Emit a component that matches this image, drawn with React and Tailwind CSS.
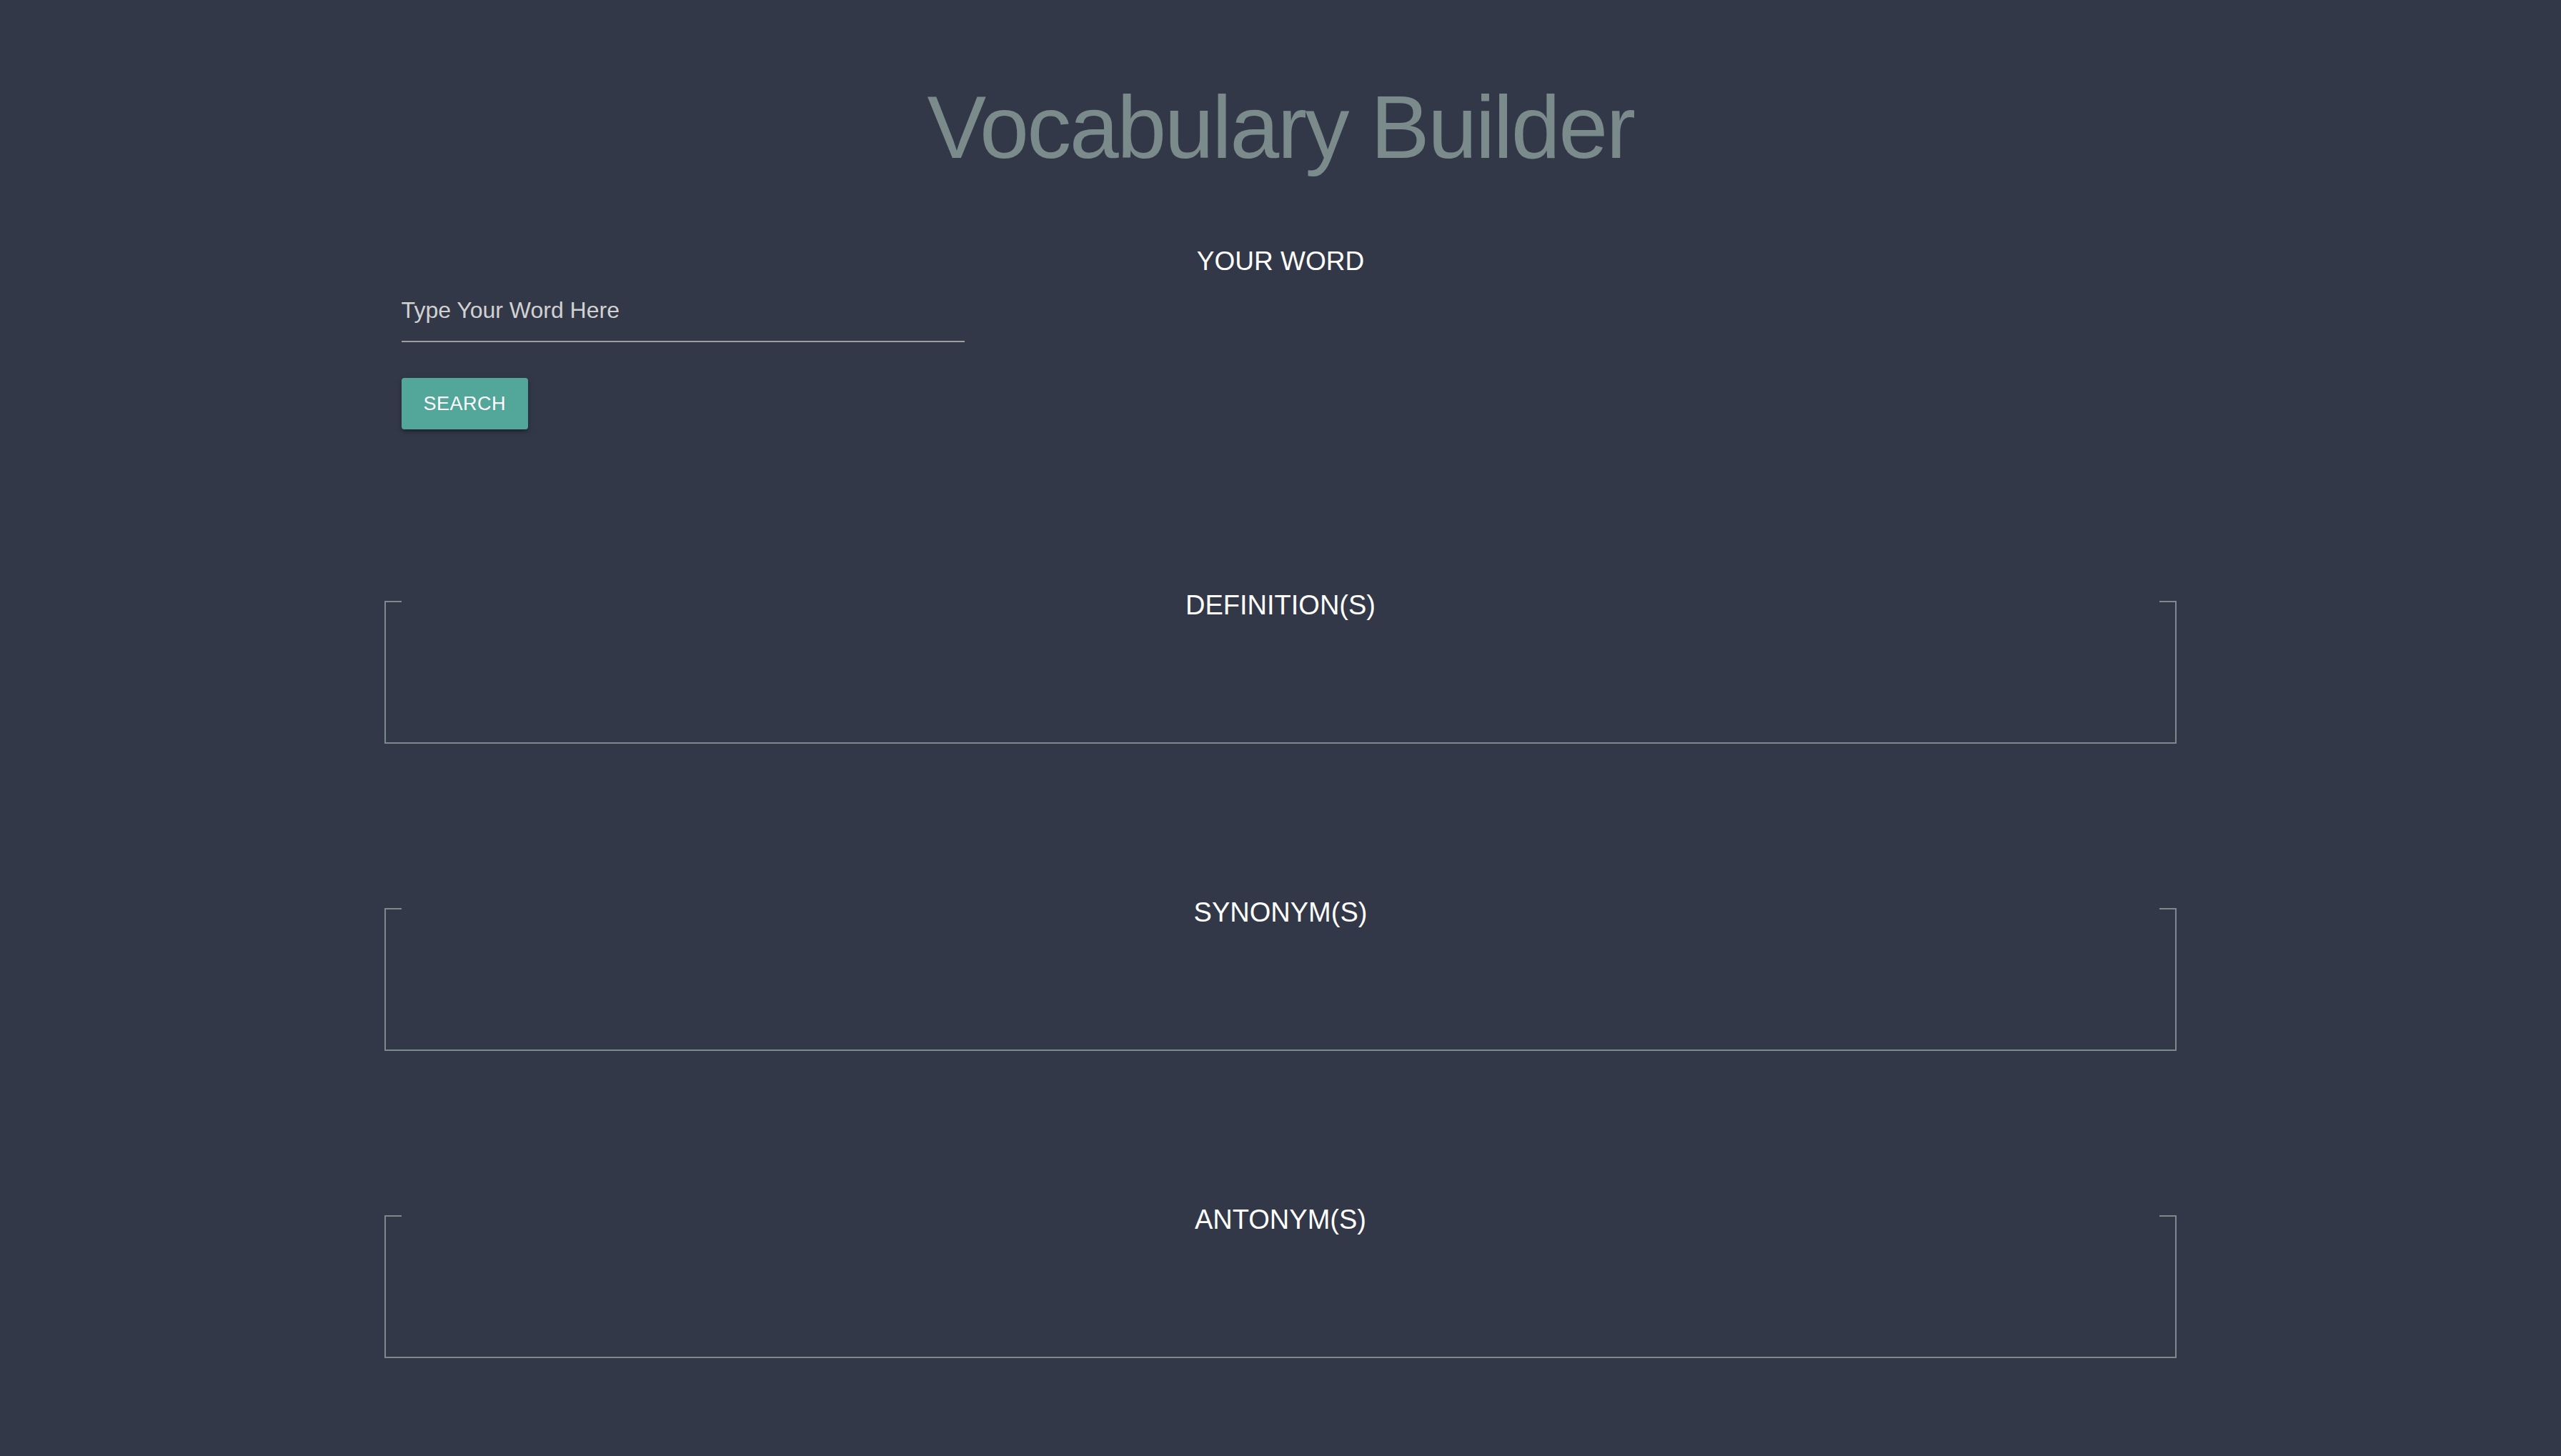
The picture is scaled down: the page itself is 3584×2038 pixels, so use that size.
import React from "react";

function Section({ title }) {
  return (
    <fieldset className="mt-[203px] first:mt-0 border-2 border-[#7b8a8a] px-[22px] pb-0">
      <legend className="w-full pt-[10px] text-center text-[38px] leading-[46px] text-white">{title}</legend>
      <div className="h-[169px]" />
    </fieldset>
  );
}

export default function App() {
  return (
    <div className="min-h-screen bg-[#333849] font-['Liberation_Sans',Arial,sans-serif] pb-[138px]">
      <h1 className="pt-[116px] text-center text-[124px] leading-[124px] font-normal text-[#7b8a8a] tracking-[-2.5px]">
        Vocabulary Builder
      </h1>
      <div className="mx-auto w-[70%]">
        <h2 className="mt-[107px] text-center text-[37px] leading-[38px] text-white">YOUR WORD</h2>
        <div className="w-1/3 px-[24px]">
          <input
            type="text"
            placeholder="Type Your Word Here"
            className="-mt-[2px] h-[96px] w-full border-b-2 border-[#9e9e9e] bg-transparent pt-[8px] text-[32px] text-white outline-none placeholder:text-[#d1d1d1]"
          />
        </div>
        <div className="px-[24px] pt-[50px]">
          <button className="h-[72px] rounded-[4px] bg-[#52a69a] px-[31px] text-[27px] leading-[72px] tracking-[0.5px] text-white uppercase shadow-[0_4px_4px_0_rgba(0,0,0,0.14),0_6px_2px_-4px_rgba(0,0,0,0.12),0_2px_10px_0_rgba(0,0,0,0.2)]">
            Search
          </button>
        </div>
        <div className="mt-[213px] flex flex-col">
          <Section title="DEFINITION(S)" />
          <Section title="SYNONYM(S)" />
          <Section title="ANTONYM(S)" />
        </div>
      </div>
    </div>
  );
}
